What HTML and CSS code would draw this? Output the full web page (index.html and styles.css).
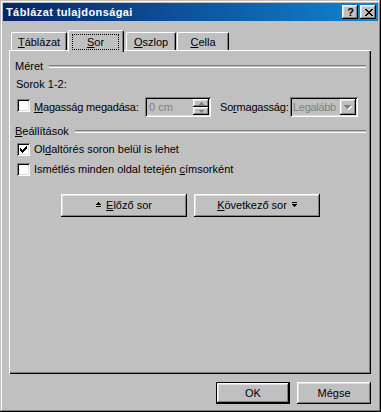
FILE: index.html
```html
<!DOCTYPE html>
<html>
<head>
<meta charset="utf-8">
<link rel="stylesheet" href="styles.css">
</head>
<body>
<div class="window">
  <div class="titlebar">
    <span class="title">Táblázat tulajdonságai</span>
    <div class="tbuttons">
      <div class="tbtn help">?</div>
      <div class="tbtn close">
        <svg width="8" height="7" viewBox="0 0 8 7" shape-rendering="crispEdges"><path d="M0 0h2v1h-2zM6 0h2v1h-2zM1 1h2v1h-2zM5 1h2v1h-2zM2 2h4v1h-4zM3 3h2v1h-2zM2 4h4v1h-4zM1 5h2v1h-2zM5 5h2v1h-2zM0 6h2v1h-2zM6 6h2v1h-2z" fill="#000"/></svg>
      </div>
    </div>
  </div>

  <div class="tabstrip">
    <div class="tab t1"><span class="u">T</span>áblázat</div>
    <div class="tab sel"><div class="focus"><span class="u">S</span>or</div></div>
    <div class="tab t3"><span class="u">O</span>szlop</div>
    <div class="tab t4"><span class="u">C</span>ella</div>
  </div>

  <div class="panel">
    <div class="group">
      <span>Méret</span><div class="etch"></div>
    </div>
    <div class="row sorok">Sorok 1-2:</div>
    <div class="row fields">
      <div class="cb"></div>
      <span class="lbl"><span class="u">M</span>agasság megadása:</span>
      <div class="spinfield">
        <span class="dis">0 cm</span>
        <div class="spin">
          <div class="sbtn"><svg width="5" height="3" viewBox="0 0 5 3" shape-rendering="crispEdges"><path d="M2 0h1v1h-1zM1 1h3v1h-3zM0 2h5v1h-5z" fill="#808080"/></svg></div>
          <div class="sbtn"><svg width="5" height="3" viewBox="0 0 5 3" shape-rendering="crispEdges"><path d="M0 0h5v1h-5zM1 1h3v1h-3zM2 2h1v1h-1z" fill="#808080"/></svg></div>
        </div>
      </div>
      <span class="lbl2">So<span class="u">r</span>magasság:</span>
      <div class="combo">
        <span class="dis">Legalább</span>
        <div class="dbtn"><svg width="8" height="5" viewBox="0 0 8 5" shape-rendering="crispEdges"><path d="M1 1h7v1h-7zM2 2h5v1h-5zM3 3h3v1h-3zM4 4h1v1h-1z" fill="#fff"/><path d="M0 0h7v1h-7zM1 1h5v1h-5zM2 2h3v1h-3zM3 3h1v1h-1z" fill="#808080"/></svg></div>
      </div>
    </div>
    <div class="group g2">
      <span><span class="u">B</span>eállítások</span><div class="etch"></div>
    </div>
    <div class="row check r1">
      <div class="cb"><svg width="7" height="7" viewBox="0 0 7 7" shape-rendering="crispEdges"><path d="M6 0h1v3h-1zM5 1h1v3h-1zM4 2h1v3h-1zM3 3h1v3h-1zM2 4h1v3h-1zM1 3h1v3h-1zM0 2h1v3h-1z" fill="#000"/></svg></div>
      <span class="lbl">Ol<span class="u">d</span>altörés soron belül is lehet</span>
    </div>
    <div class="row check r2">
      <div class="cb"></div>
      <span class="lbl">Ismétlés minden oldal tetején <span class="u">c</span>ímsorként</span>
    </div>
    <div class="navrow">
      <div class="btn nav">
        <svg class="ico" width="5" height="7" viewBox="0 0 5 7" shape-rendering="crispEdges"><path d="M2 0h1v1h-1zM1 1h3v1h-3zM0 2h5v1h-5zM0 4h5v1h-5z" fill="#000"/></svg>
        <span><span class="u">E</span>lőző sor</span>
      </div>
      <div class="btn nav">
        <span><span class="u">K</span>övetkező sor</span>
        <svg class="ico" width="5" height="7" viewBox="0 0 5 7" shape-rendering="crispEdges"><path d="M0 0h5v1h-5zM0 2h5v1h-5zM1 3h3v1h-3zM2 4h1v1h-1z" fill="#000"/></svg>
      </div>
    </div>
  </div>

  <div class="bottom">
    <div class="btn def"><div class="inner">OK</div></div>
    <div class="btn dlg">Mégse</div>
  </div>
</div>
</body>
</html>
```

FILE: styles.css
```css
html, body {
  margin: 0;
  padding: 0;
  background: #c0c0c0;
}
body {
  font-family: "Liberation Sans", Arial, sans-serif;
  font-size: 11px;
  color: #000;
}
.u { text-decoration: underline; text-underline-offset: 1px; }

.window {
  width: 381px;
  height: 412px;
  box-sizing: border-box;
  padding: 3px;
  background: #c0c0c0;
  box-shadow: inset -1px -1px #000, inset 1px 1px #c0c0c0, inset -2px -2px #808080, inset 2px 2px #fff;
  display: flex;
  flex-direction: column;
}

.titlebar {
  height: 18px;
  background: linear-gradient(90deg, #0a246a 0%, #1084d0 100%);
  display: flex;
  align-items: flex-start;
  justify-content: space-between;
}
.title {
  color: #fff;
  font-weight: bold;
  font-size: 11px;
  line-height: 18px;
  padding-left: 3px;
  letter-spacing: 0.4px;
  white-space: nowrap;
}
.tbuttons {
  display: flex;
  gap: 2px;
  margin-top: 2px;
  margin-right: 2px;
}
.tbtn {
  width: 16px;
  height: 14px;
  box-sizing: border-box;
  background: #c0c0c0;
  box-shadow: inset -1px -1px #000, inset 1px 1px #fff, inset -2px -2px #808080, inset 2px 2px #dfdfdf;
  display: flex;
  align-items: center;
  justify-content: center;
}
.help {
  font-weight: bold;
  font-size: 11px;
  line-height: 14px;
  padding-left: 1px;
}
.close svg { margin-left: 1px; }

.tabstrip {
  margin-top: 8px;
  height: 22px;
  display: flex;
  align-items: flex-end;
  padding-left: 8px;
}
.tab {
  box-sizing: border-box;
  height: 18px;
  margin-bottom: 1px;
  border-top: 1px solid #fff;
  border-left: 1px solid #fff;
  border-right: 1px solid #000;
  border-radius: 2px 2px 0 0;
  box-shadow: inset -1px 0 #808080;
  text-align: center;
  line-height: 13px;
  padding-top: 3px;
  white-space: nowrap;
}
.t1 { width: 56px; margin-right: 1px; }
.t3 { width: 50px; margin-left: 2px; margin-right: 1px; }
.t4 { width: 52px; }
.tab.sel {
  width: 56px;
  height: 22px;
  margin-bottom: -1px;
  padding-top: 3px;
  position: relative;
  z-index: 1;
  background: #c0c0c0;
}
.focus {
  margin: 0 4px 0 3px;
  height: 16px;
  box-sizing: border-box;
  border: 1px dotted #000;
  padding-top: 1px;
  line-height: 13px;
}

.panel {
  position: relative;
  margin: -1px 7px 0 6px;
  height: 324px;
  box-sizing: border-box;
  box-shadow: inset 1px 1px #fff, inset -1px -1px #000, inset -2px -2px #808080;
  padding: 10px 5px 0 6px;
  display: flex;
  flex-direction: column;
}
.group {
  height: 13px;
  line-height: 13px;
  display: flex;
  align-items: flex-start;
  white-space: nowrap;
}
.etch {
  flex: 1;
  height: 1px;
  margin-top: 5px;
  margin-left: 6px;
  border-top: 1px solid #808080;
  border-bottom: 1px solid #fff;
}
.row {
  line-height: 13px;
  display: flex;
  align-items: center;
  white-space: nowrap;
}
.sorok { margin-top: 5px; height: 13px; padding-left: 1px; }
.fields { margin-top: 6px; height: 20px; }
.cb {
  width: 13px;
  height: 13px;
  box-sizing: border-box;
  background: #fff;
  box-shadow: inset 1px 1px #808080, inset -1px -1px #fff, inset 2px 2px #000, inset -2px -2px #dfdfdf;
  margin-left: 2px;
  flex: none;
  display: flex;
  align-items: center;
  justify-content: center;
}
.fields .cb { margin-top: -3px; }
.lbl { margin-left: 4px; flex: none; }
.fields .lbl { width: 111px; letter-spacing: -0.2px; }
.spinfield, .combo {
  flex: none;
  height: 20px;
  box-sizing: border-box;
  padding: 2px;
  background: #c0c0c0;
  box-shadow: inset 1px 1px #808080, inset -1px -1px #fff, inset 2px 2px #000, inset -2px -2px #dfdfdf;
  display: flex;
  align-items: center;
}
.spinfield { width: 66px; }
.dis { color: #808080; flex: 1; padding-left: 2px; overflow: hidden; }
.spin {
  flex: none;
  width: 16px;
  height: 16px;
  display: flex;
  flex-direction: column;
}
.sbtn {
  height: 8px;
  box-sizing: border-box;
  background: #c0c0c0;
  box-shadow: inset -1px -1px #000, inset 1px 1px #fff, inset -2px -2px #808080, inset 2px 2px #dfdfdf;
  display: flex;
  align-items: center;
  justify-content: center;
}
.lbl2 { margin-left: 9px; width: 70px; flex: none; letter-spacing: -0.2px; }
.combo { width: 68px; }
.combo .dis { padding-left: 1px; letter-spacing: -0.3px; }
.dbtn {
  flex: none;
  width: 16px;
  height: 16px;
  box-sizing: border-box;
  background: #c0c0c0;
  box-shadow: inset -1px -1px #000, inset 1px 1px #fff, inset -2px -2px #808080, inset 2px 2px #dfdfdf;
  display: flex;
  align-items: center;
  justify-content: center;
}
.g2 { margin-top: 8px; }
.check { height: 13px; }
.r1 { margin-top: 5px; }
.r2 { margin-top: 7px; }

.navrow {
  margin-top: 18px;
  display: flex;
  justify-content: center;
  gap: 7px;
}
.btn {
  box-sizing: border-box;
  background: #c0c0c0;
  box-shadow: inset -1px -1px #000, inset 1px 1px #fff, inset -2px -2px #808080, inset 2px 2px #dfdfdf;
  display: flex;
  align-items: center;
  justify-content: center;
  line-height: 13px;
  white-space: nowrap;
}
.nav {
  width: 126px;
  height: 23px;
  gap: 5px;
}
.bottom {
  margin-top: 8px;
  display: flex;
  justify-content: flex-end;
  gap: 7px;
  padding-right: 7px;
}
.dlg, .def {
  width: 74px;
  height: 22px;
}
.def {
  box-shadow: none;
  border: 1px solid #000;
  padding: 0;
}
.def .inner {
  width: 100%;
  height: 100%;
  box-sizing: border-box;
  box-shadow: inset -1px -1px #000, inset 1px 1px #fff, inset -2px -2px #808080, inset 2px 2px #dfdfdf;
  display: flex;
  align-items: center;
  justify-content: center;
}
```
